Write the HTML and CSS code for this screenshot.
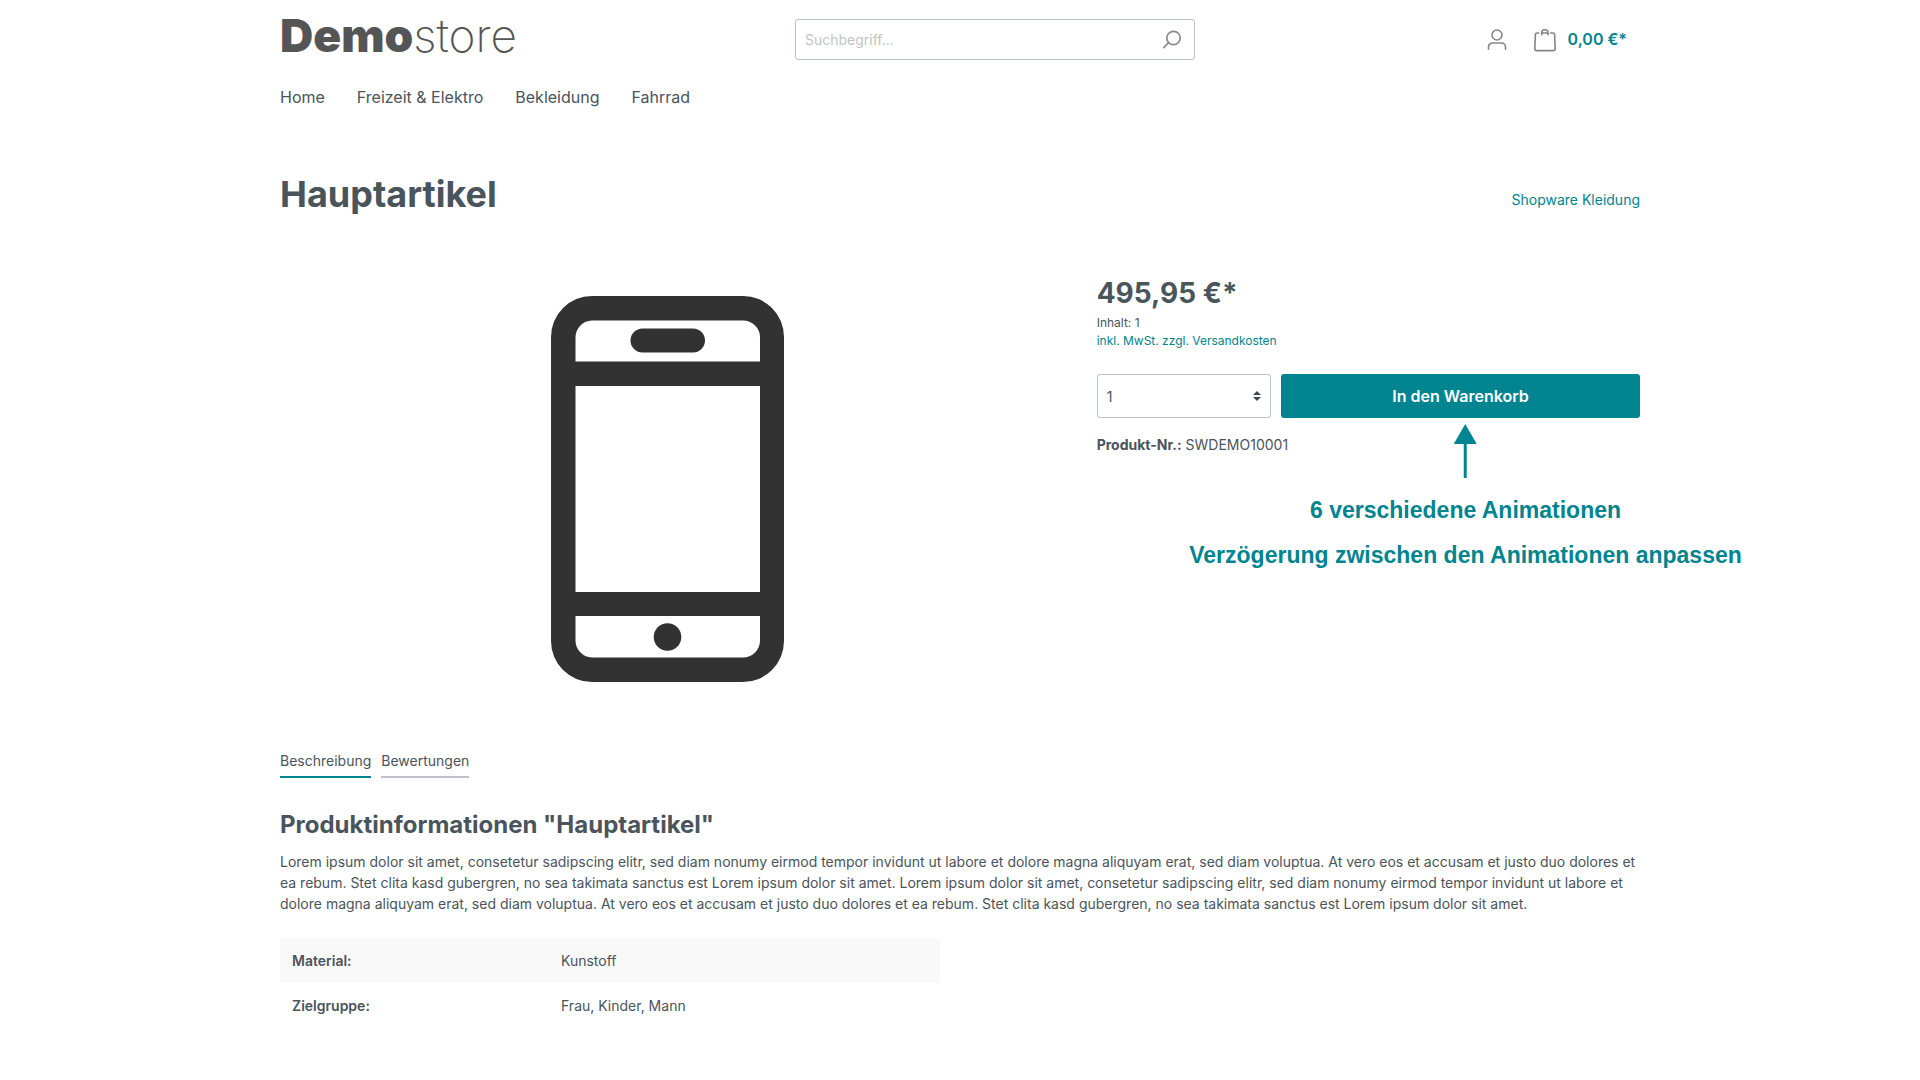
FILE: index.html
```html
<!DOCTYPE html>
<html lang="de">
<head>
<meta charset="utf-8">
<meta name="viewport" content="width=device-width, initial-scale=1">
<title>Hauptartikel</title>
<link rel="stylesheet" href="styles.css">
</head>
<body>
<div class="container">
  <header class="header">
    <a class="logo" href="#"><span class="logo-bold">Demo</span><span class="logo-thin">store</span></a>
    <form class="search" role="search">
      <input class="search-input" type="search" placeholder="Suchbegriff..." aria-label="Suchbegriff">
      <button class="search-button" type="button" aria-label="Suchen">
        <svg width="20" height="20" viewBox="0 0 20 20" fill="none" stroke="#8a8a8a" stroke-width="1.700" stroke-linecap="round"><circle cx="11.500" cy="8" r="6.700"/><path d="M6.500 12.700 1.800 17.600"/></svg>
      </button>
    </form>
    <div class="actions">
      <a class="account" href="#" aria-label="Mein Konto">
        <svg width="22" height="22" viewBox="0 0 22 22" fill="none" stroke="#858585" stroke-width="1.600" stroke-linecap="round"><circle cx="11" cy="6" r="5"/><path d="M2.500 20.300v-2.300a4 4 0 0 1 4-4h9a4 4 0 0 1 4 4v2.300"/></svg>
      </a>
      <a class="cart" href="#" aria-label="Warenkorb">
        <svg width="24" height="24" viewBox="0 0 24 24" fill="none" stroke="#858585" stroke-width="1.600" stroke-linecap="round" stroke-linejoin="round"><path d="M5.800 5H4Q2.500 5 2.400 6.500L1.800 20.500Q1.800 22.600 3.800 22.600H20.200Q22.200 22.600 22.200 20.500L21.600 6.500Q21.500 5 20 5H17.500M9.800 5h4.400M8.800 6.800V4.600a2.800 2.800 0 0 1 2.800-2.800h.6a2.800 2.800 0 0 1 2.800 2.800V6.800"/></svg>
        <span>0,00 €*</span>
      </a>
    </div>
  </header>

  <nav class="nav">
    <a href="#">Home</a>
    <a href="#">Freizeit &amp; Elektro</a>
    <a href="#">Bekleidung</a>
    <a href="#">Fahrrad</a>
  </nav>

  <main>
    <div class="heading">
      <h1>Hauptartikel</h1>
      <a href="#">Shopware Kleidung</a>
    </div>

    <div class="product">
      <div class="gallery">
        <svg class="phone" width="233" height="386" viewBox="0 0 233 386" fill="#323232" role="img" aria-label="Hauptartikel">
          <path fill-rule="evenodd" d="M41 0H192A41 41 0 0 1 233 41V345A41 41 0 0 1 192 386H41A41 41 0 0 1 0 345V41A41 41 0 0 1 41 0ZM41 24.500A17 17 0 0 0 24.500 41V65.500H209V41A17 17 0 0 0 192 24.500ZM24.500 90V296H209V90ZM24.500 320V345A17 17 0 0 0 41 361.500H192A17 17 0 0 0 209 345V320Z"/>
          <rect x="79.500" y="32.500" width="74.500" height="24" rx="12"/>
          <circle cx="116.500" cy="341" r="13.800"/>
        </svg>
      </div>
      <div class="buy">
        <p class="price">495,95 €*</p>
        <p class="unit">Inhalt: 1</p>
        <a class="tax" href="#">inkl. MwSt. zzgl. Versandkosten</a>
        <form class="buy-form">
          <div class="quantity">
            <select aria-label="Menge"><option>1</option><option>2</option><option>3</option></select>
            <svg class="caret" width="8" height="10" viewBox="0 0 8 10" fill="#3f484f"><path d="M4 0 8 4H0ZM0 6H8L4 10Z"/></svg>
          </div>
          <div class="buy-action">
            <button class="buy-button" type="button">In den Warenkorb</button>
            <div class="note">
              <svg width="23" height="54" viewBox="0 0 23 54" fill="#008490"><path d="M11.500 0 23 20H13V54H10V20H0Z"/></svg>
              <p>6 verschiedene Animationen</p>
              <p>Verzögerung zwischen den Animationen anpassen</p>
            </div>
          </div>
        </form>
        <p class="number"><strong>Produkt-Nr.:</strong> SWDEMO10001</p>
      </div>
    </div>

    <div class="tabs">
      <a class="tab active" href="#">Beschreibung</a>
      <a class="tab" href="#">Bewertungen</a>
    </div>

    <section class="description">
      <h2>Produktinformationen "Hauptartikel"</h2>
      <p>Lorem ipsum dolor sit amet, consetetur sadipscing elitr, sed diam nonumy eirmod tempor invidunt ut labore et dolore magna aliquyam erat, sed diam voluptua. At vero eos et accusam et justo duo dolores et ea rebum. Stet clita kasd gubergren, no sea takimata sanctus est Lorem ipsum dolor sit amet. Lorem ipsum dolor sit amet, consetetur sadipscing elitr, sed diam nonumy eirmod tempor invidunt ut labore et dolore magna aliquyam erat, sed diam voluptua. At vero eos et accusam et justo duo dolores et ea rebum. Stet clita kasd gubergren, no sea takimata sanctus est Lorem ipsum dolor sit amet.</p>
      <table class="properties">
        <tbody>
          <tr><th scope="row">Material:</th><td>Kunstoff</td></tr>
          <tr><th scope="row">Zielgruppe:</th><td>Frau, Kinder, Mann</td></tr>
        </tbody>
      </table>
    </section>
  </main>
</div>
</body>
</html>
```

FILE: styles.css
```css
*, *::before, *::after {
  box-sizing: border-box;
}

body {
  margin: 0;
  background: #fff;
  color: #4a545b;
  font: 14px/21px Inter, "Liberation Sans", sans-serif;
}

h1, h2, p {
  margin: 0;
}

a {
  color: #008490;
  text-decoration: none;
}

input, select, button {
  font: inherit;
}

svg {
  display: block;
}

.container {
  max-width: 1400px;
  margin: 0 auto;
  padding: 0 20px;
}

.header {
  display: grid;
  grid-template-columns: 1fr 400px 445px;
  align-items: center;
  height: 79px;
}

.logo {
  padding-bottom: 10px;
  color: #555;
  font-size: 46px;
  line-height: 64px;
}

.logo-bold {
  font-weight: 900;
}

.logo-thin {
  font-weight: 200;
}

.search {
  display: flex;
  height: 41px;
  border: 1px solid #bcc1c7;
  border-radius: 3px;
}

.search-input {
  flex: 1;
  min-width: 0;
  padding: 0 9px;
  border: 0;
  background: none;
  color: #4a545b;
  outline: 0;
}

.search-input::placeholder {
  color: #c3c3c3;
}

.search-button {
  padding: 0 12px;
  border: 0;
  background: none;
}

.actions {
  display: flex;
  justify-content: flex-end;
  align-items: center;
  gap: 25px;
  padding-right: 13px;
}

.cart {
  display: flex;
  align-items: center;
  gap: 11px;
  font-size: 16px;
  font-weight: 600;
}

.nav {
  display: flex;
  gap: 32px;
  padding: 6px 0 5px;
  font-size: 16px;
  line-height: 24px;
}

.nav a {
  color: #4a545b;
}

.heading {
  display: flex;
  justify-content: space-between;
  align-items: center;
  padding-top: 56px;
}

h1 {
  font-size: 36px;
  line-height: 48px;
  font-weight: 700;
}

.heading a {
  padding-top: 10px;
}

.product {
  display: grid;
  grid-template-columns: repeat(12, 1fr);
  column-gap: 40px;
  padding-top: 57px;
}

.gallery {
  grid-column: span 7;
  display: flex;
  justify-content: center;
  align-items: center;
  height: 428px;
  padding-right: 2px;
}

.buy {
  grid-column: span 5;
}

.price {
  font-size: 28px;
  line-height: 36px;
  font-weight: 700;
}

.unit, .tax {
  display: block;
  font-size: 12px;
  line-height: 18px;
}

.unit {
  padding-top: 3px;
}

.buy-form {
  display: grid;
  grid-template-columns: repeat(12, 1fr);
  column-gap: 10px;
  padding: 24px 0 16px;
}

.quantity {
  grid-column: span 4;
  position: relative;
}

.quantity select {
  appearance: none;
  display: block;
  width: 100%;
  height: 44px;
  padding: 0 9px;
  border: 1px solid #bcc1c7;
  border-radius: 3px;
  background: #fff;
  color: #4a545b;
}

.caret {
  position: absolute;
  right: 10px;
  top: 17px;
  pointer-events: none;
}

.buy-action {
  grid-column: span 8;
  position: relative;
}

.buy-button {
  display: block;
  width: 100%;
  height: 44px;
  border: 0;
  border-radius: 3px;
  background: #008490;
  color: #fff;
  font-size: 16px;
  font-weight: 600;
}

.note {
  position: absolute;
  top: calc(100% + 6px);
  left: calc(50% + 5px);
  transform: translateX(-50%);
  display: flex;
  flex-direction: column;
  align-items: center;
  color: #008490;
  font: bold 23px/45px "Liberation Sans", Arial, sans-serif;
  white-space: nowrap;
}

.note svg {
  margin-bottom: 10px;
}

.tabs {
  display: flex;
  gap: 10px;
  padding-top: 47px;
}

.tab {
  padding-bottom: 5px;
  border-bottom: 2px solid #bcc1c7;
  color: #4a545b;
}

.tab.active {
  border-color: #008490;
}

.description {
  padding-top: 29px;
}

h2 {
  font-size: 24px;
  line-height: 36px;
  font-weight: 700;
  margin-bottom: 8px;
}

.properties {
  width: calc(50% - 20px);
  margin: 24px 0 40px;
  border-collapse: collapse;
  text-align: left;
}

.properties th, .properties td {
  padding: 12px;
}

.properties th {
  width: 269px;
  font-weight: 600;
}

.properties tr:nth-child(odd) {
  background: #f9f9f9;
}
```
